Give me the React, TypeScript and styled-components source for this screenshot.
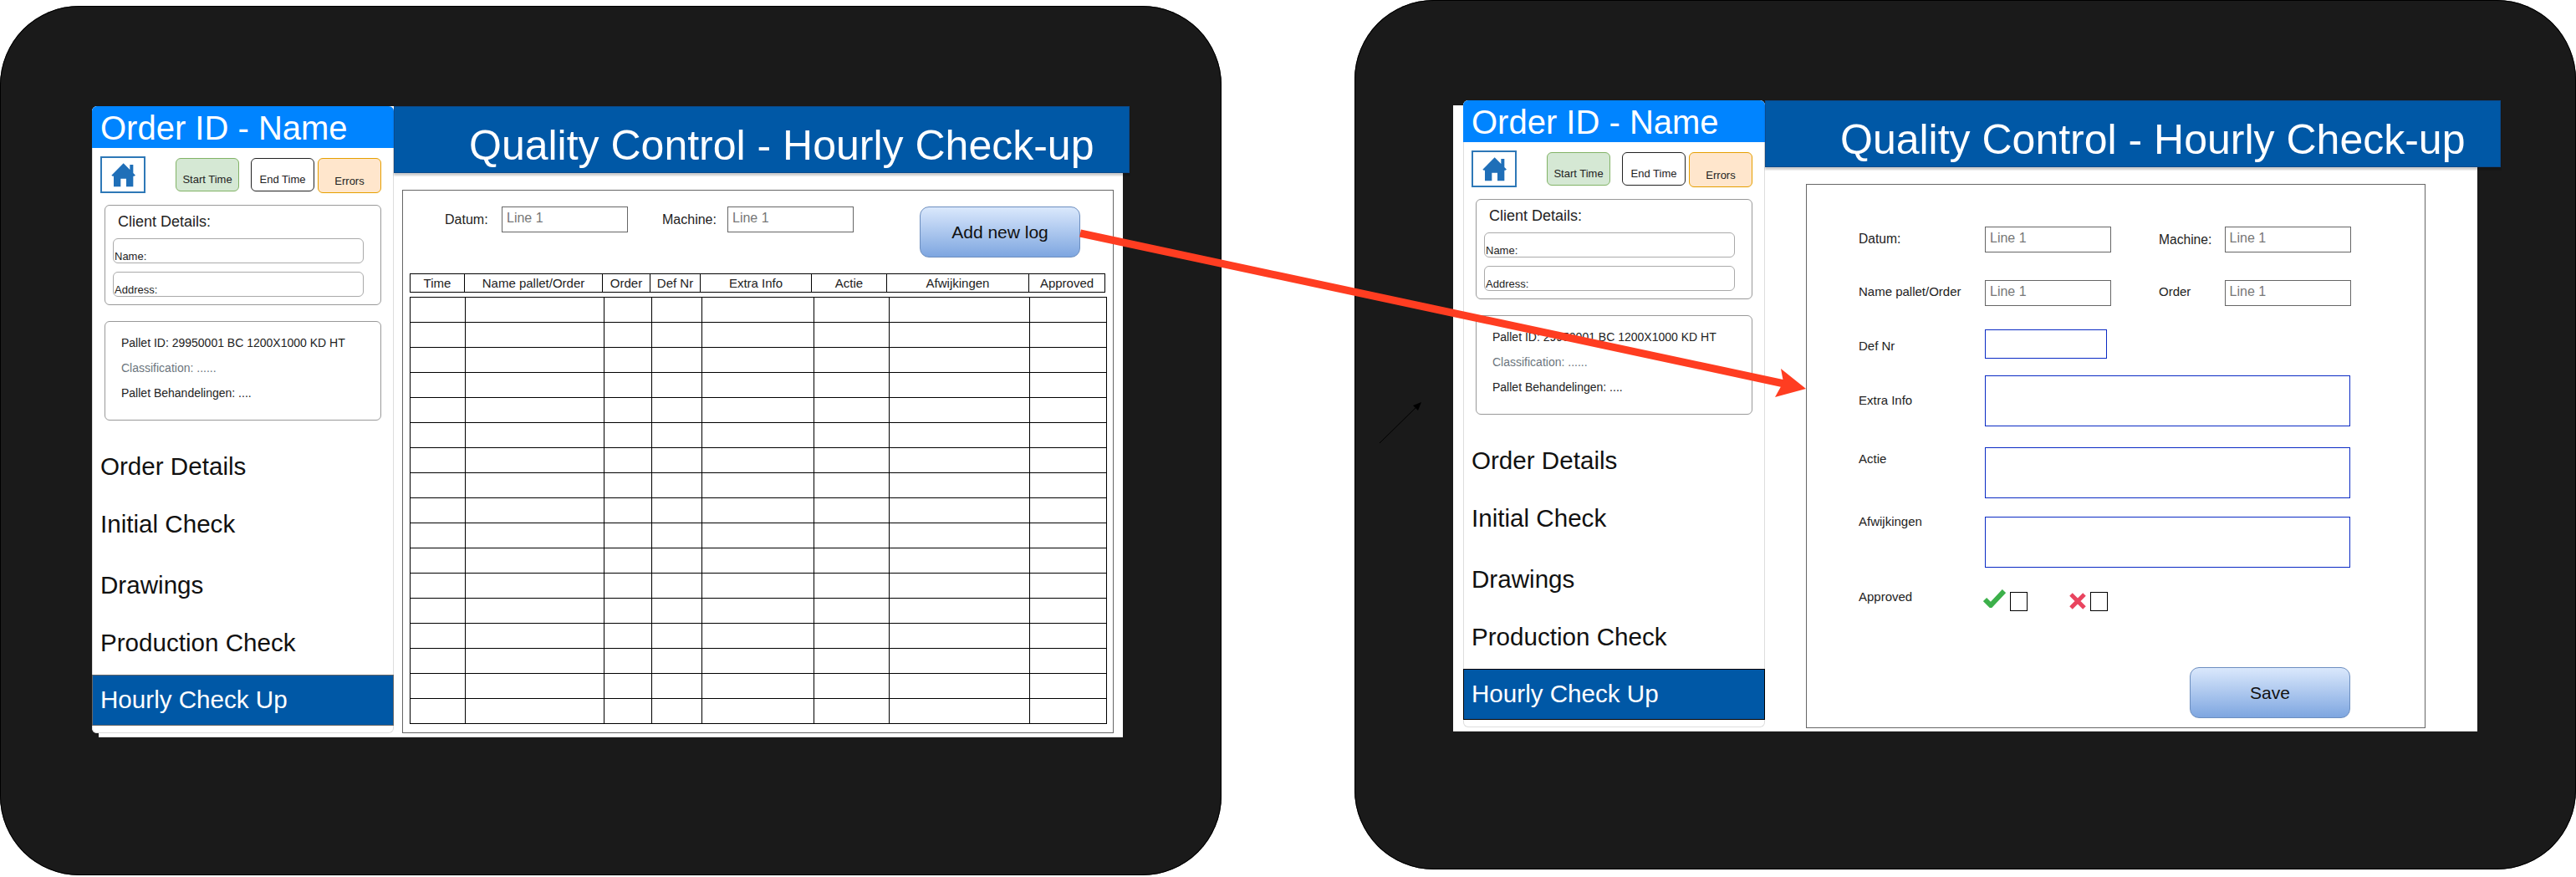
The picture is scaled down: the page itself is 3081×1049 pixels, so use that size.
import React from 'react';
import styled, { createGlobalStyle } from 'styled-components';

const GlobalStyle = createGlobalStyle`
  html, body {
    margin: 0;
    padding: 0;
    background: #fff;
    font-family: "Liberation Sans", Arial, sans-serif;
  }
  * {
    box-sizing: border-box;
  }
`;

const Page = styled.div`
  position: relative;
  display: flex;
  justify-content: space-between;
  align-items: flex-start;
  width: 3081px;
  height: 1049px;
  overflow: hidden;
`;

const Tablet = styled.div<{ $top: number; $paddingTop: number }>`
  width: 1461px;
  height: 1040px;
  margin-top: ${(p) => p.$top}px;
  padding-top: ${(p) => p.$paddingTop}px;
  background: #1a1a1a;
  border-radius: 95px;
  box-shadow: inset 0 0 0 1px #000;
`;

const Screen = styled.div<{ $left: number; $height: number }>`
  display: flex;
  align-items: flex-start;
  width: 1225px;
  height: ${(p) => p.$height}px;
  margin-left: ${(p) => p.$left}px;
  background: #fff;
  box-shadow: 0 1px 0 #ddd;
`;

const Sidebar = styled.div<{ $left: number; $top: number }>`
  flex: none;
  width: 361px;
  height: 750px;
  margin-left: ${(p) => p.$left}px;
  margin-top: ${(p) => p.$top}px;
  background: #fff;
  border-radius: 6px;
  box-shadow: inset 0 0 0 1px #ddd;
`;

const SidebarHeader = styled.div`
  height: 50px;
  padding: 3px 0 0 10px;
  background: #0084ff;
  border-radius: 6px 6px 0 0;
  color: #fff;
  font-size: 40px;
  line-height: 46px;
`;

const Toolbar = styled.div`
  display: flex;
  align-items: flex-start;
  height: 44px;
  margin: 10px 0 0 10px;
`;

const HomeButton = styled.div`
  display: flex;
  align-items: center;
  justify-content: center;
  width: 54px;
  height: 44px;
  margin-right: 36px;
  border: 2px solid #2e78b7;
`;

const StatusButton = styled.div<{ $bg: string; $line: string; $height: number; $gap: number }>`
  display: flex;
  align-items: flex-end;
  justify-content: center;
  width: 76px;
  height: ${(p) => p.$height}px;
  margin-top: 2px;
  margin-right: ${(p) => p.$gap}px;
  padding-bottom: 6px;
  background: ${(p) => p.$bg};
  border: 1px solid ${(p) => p.$line};
  border-radius: 6px;
  color: #222;
  font-size: 13px;
  line-height: 15px;
`;

const DetailsBox = styled.div<{ $top: number; $height: number }>`
  width: 331px;
  height: ${(p) => p.$height}px;
  margin: ${(p) => p.$top}px 0 0 15px;
  border: 1px solid #999;
  border-radius: 6px;
`;

const ClientBox = styled(DetailsBox)`
  padding: 9px 0 0 9px;
`;

const PalletBox = styled(DetailsBox)`
  padding: 10px 0 0 19px;
`;

const ClientTitle = styled.div`
  margin: 0 0 10px 6px;
  color: #222;
  font-size: 18px;
  line-height: 20px;
`;

const ClientField = styled.div`
  display: flex;
  align-items: flex-end;
  width: 300px;
  height: 30px;
  margin-bottom: 10px;
  padding-left: 1px;
  border: 1px solid #aaa;
  border-radius: 6px;
  color: #222;
  font-size: 13px;
  line-height: 15px;
`;

const PalletLine = styled.div<{ $muted?: boolean }>`
  color: ${(p) => (p.$muted ? '#6c757d' : '#222')};
  font-size: 14px;
  line-height: 30px;
`;

const NavList = styled.div`
  margin-top: 38px;
`;

const NavItem = styled.div<{ $height: number }>`
  height: ${(p) => p.$height}px;
  padding-left: 10px;
  color: #111;
  font-size: 29.6px;
  line-height: 34px;
`;

const ActiveNavItem = styled.div<{ $line: string }>`
  height: 61px;
  padding: 12px 0 0 9px;
  background: #0058a6;
  border: 1px solid ${(p) => p.$line};
  color: #fff;
  font-size: 29.6px;
  line-height: 34px;
`;

const Main = styled.div<{ $top: number }>`
  flex: 1;
  min-width: 0;
  margin-top: ${(p) => p.$top}px;
`;

const TitleBar = styled.div<{ $overhang: number }>`
  height: 80px;
  margin-right: -${(p) => p.$overhang}px;
  padding: 17px 0 0 89px;
  background: #0058a6;
  border: 1px solid #0a4a8c;
  box-shadow: 0 3px 2px rgba(0, 0, 0, 0.2);
  color: #fff;
  font-size: 50px;
  line-height: 58px;
  white-space: nowrap;
`;

const LogPanel = styled.div`
  width: 851px;
  height: 650px;
  margin: 20px 0 0 10px;
  padding: 19px 0 0 8px;
  border: 1px solid #666;
`;

const FilterRow = styled.div`
  display: flex;
  align-items: flex-start;
  padding-left: 42px;
`;

const FieldLabel = styled.div<{ $width: number; $top: number; $size?: number; $left?: number }>`
  flex: none;
  width: ${(p) => p.$width}px;
  margin-top: ${(p) => p.$top}px;
  margin-left: ${(p) => p.$left ?? 0}px;
  color: #222;
  font-size: ${(p) => p.$size ?? 15}px;
  line-height: 18px;
  white-space: nowrap;
`;

const LineInput = styled.div`
  flex: none;
  width: 151px;
  height: 31px;
  padding: 4px 0 0 5px;
  border: 1px solid #666;
  color: #777;
  font-size: 16px;
  line-height: 18px;
`;

const BlueBox = styled.div<{ $width: number; $height: number }>`
  flex: none;
  width: ${(p) => p.$width}px;
  height: ${(p) => p.$height}px;
  border: 1px solid #0a2ac4;
`;

const GradientButton = styled.div<{ $left: number }>`
  flex: none;
  display: flex;
  align-items: center;
  justify-content: center;
  width: 192px;
  height: 61px;
  margin-left: ${(p) => p.$left}px;
  background: linear-gradient(180deg, #dae8fc 0%, #7ea6e0 100%);
  border: 1px solid #6c8ebf;
  border-radius: 11px;
  color: #111;
  font-size: 21px;
`;

const LogTable = styled.table<{ $width: number; $top: number }>`
  width: ${(p) => p.$width}px;
  margin-top: ${(p) => p.$top}px;
  border-collapse: collapse;
  table-layout: fixed;

  td,
  th {
    padding: 0;
    border: 1px solid #000;
    color: #222;
    font-size: 15px;
    font-weight: 400;
    line-height: 18px;
    text-align: center;
    white-space: nowrap;
    overflow: hidden;
  }
`;

const HeadRow = styled.tr`
  height: 22px;
`;

const BodyRow = styled.tr`
  height: 30px;
`;

const FormPanel = styled.div`
  display: flex;
  flex-direction: column;
  width: 741px;
  height: 651px;
  margin: 20px 0 0 49px;
  padding: 50px 0 0 62px;
  border: 1px solid #666;
`;

const FormRow = styled.div<{ $top?: number }>`
  display: flex;
  align-items: flex-start;
  margin-top: ${(p) => p.$top ?? 0}px;
`;

const CheckBox = styled.div`
  flex: none;
  width: 21px;
  height: 23px;
  margin: 3px 0 0 5px;
  border: 1px solid #000;
`;

const MarkIcon = styled.svg<{ $left?: number; $top?: number }>`
  flex: none;
  display: block;
  margin-left: ${(p) => p.$left ?? 0}px;
  margin-top: ${(p) => p.$top ?? 0}px;
`;

const ArrowLayer = styled.svg`
  position: absolute;
  left: 0;
  top: 0;
  pointer-events: none;
`;

const headColumns = [65, 165, 57, 60, 133, 90, 170, 91];
const bodyColumns = [66, 166, 57, 60, 134, 90, 168, 92];
const headLabels = ['Time', 'Name pallet/Order', 'Order', 'Def Nr', 'Extra Info', 'Actie', 'Afwijkingen', 'Approved'];

function HomeIcon(): JSX.Element {
  return (
    <svg width="29" height="29" viewBox="0 0 87 87">
      <path
        d="M44 1L67 24V6H79V36L87 44L82 47H79V85H54V56H34V85H9V47H5L1 44Z"
        fill="#1f6fb8"
      />
    </svg>
  );
}

function SidebarContent(props: { barLine: string }): JSX.Element {
  return (
    <>
      <SidebarHeader>Order ID - Name</SidebarHeader>
      <Toolbar>
        <HomeButton>
          <HomeIcon />
        </HomeButton>
        <StatusButton $bg="#d5e8d4" $line="#82b366" $height={40} $gap={14}>
          Start Time
        </StatusButton>
        <StatusButton $bg="#fff" $line="#222" $height={40} $gap={4}>
          End Time
        </StatusButton>
        <StatusButton $bg="#ffe6cc" $line="#e69f00" $height={42} $gap={0}>
          Errors
        </StatusButton>
      </Toolbar>
      <ClientBox $top={14} $height={120}>
        <ClientTitle>Client Details:</ClientTitle>
        <ClientField>Name:</ClientField>
        <ClientField>Address:</ClientField>
      </ClientBox>
      <PalletBox $top={19} $height={119}>
        <PalletLine>Pallet ID: 29950001 BC 1200X1000 KD HT</PalletLine>
        <PalletLine $muted>Classification: ......</PalletLine>
        <PalletLine>Pallet Behandelingen: ....</PalletLine>
      </PalletBox>
      <NavList>
        <NavItem $height={69}>Order Details</NavItem>
        <NavItem $height={73}>Initial Check</NavItem>
        <NavItem $height={69}>Drawings</NavItem>
        <NavItem $height={55}>Production Check</NavItem>
        <ActiveNavItem $line={props.barLine}>Hourly Check Up</ActiveNavItem>
      </NavList>
    </>
  );
}

function LogOverview(): JSX.Element {
  return (
    <LogPanel>
      <FilterRow>
        <FieldLabel $width={68} $top={7} $size={16}>
          Datum:
        </FieldLabel>
        <LineInput>Line 1</LineInput>
        <FieldLabel $width={78} $left={41} $top={7} $size={16}>
          Machine:
        </FieldLabel>
        <LineInput>Line 1</LineInput>
        <GradientButton $left={79}>Add new log</GradientButton>
      </FilterRow>
      <LogTable $width={831} $top={19}>
        <colgroup>
          {headColumns.map((w, i) => (
            <col key={i} width={w} />
          ))}
        </colgroup>
        <thead>
          <HeadRow>
            {headLabels.map((label) => (
              <th key={label}>{label}</th>
            ))}
          </HeadRow>
        </thead>
      </LogTable>
      <LogTable $width={833} $top={5}>
        <colgroup>
          {bodyColumns.map((w, i) => (
            <col key={i} width={w} />
          ))}
        </colgroup>
        <tbody>
          {Array.from({ length: 17 }).map((_, row) => (
            <BodyRow key={row}>
              {bodyColumns.map((_w, cell) => (
                <td key={cell} />
              ))}
            </BodyRow>
          ))}
        </tbody>
      </LogTable>
    </LogPanel>
  );
}

function LogForm(): JSX.Element {
  return (
    <FormPanel>
      <FormRow>
        <FieldLabel $width={151} $top={6} $size={15.6}>
          Datum:
        </FieldLabel>
        <LineInput>Line 1</LineInput>
        <FieldLabel $width={78.6} $left={57} $top={7} $size={15.6}>
          Machine:
        </FieldLabel>
        <LineInput>Line 1</LineInput>
      </FormRow>
      <FormRow $top={33}>
        <FieldLabel $width={151} $top={5}>
          Name pallet/Order
        </FieldLabel>
        <LineInput>Line 1</LineInput>
        <FieldLabel $width={78.6} $left={57} $top={5}>
          Order
        </FieldLabel>
        <LineInput>Line 1</LineInput>
      </FormRow>
      <FormRow $top={28}>
        <FieldLabel $width={151} $top={11}>
          Def Nr
        </FieldLabel>
        <BlueBox $width={146} $height={35} />
      </FormRow>
      <FormRow $top={20}>
        <FieldLabel $width={151} $top={21}>
          Extra Info
        </FieldLabel>
        <BlueBox $width={437} $height={61} />
      </FormRow>
      <FormRow $top={25}>
        <FieldLabel $width={151} $top={5}>
          Actie
        </FieldLabel>
        <BlueBox $width={437} $height={61} />
      </FormRow>
      <FormRow $top={22}>
        <FieldLabel $width={151} $top={-3}>
          Afwijkingen
        </FieldLabel>
        <BlueBox $width={437} $height={61} />
      </FormRow>
      <FormRow $top={26}>
        <FieldLabel $width={149} $top={0}>
          Approved
        </FieldLabel>
        <MarkIcon width="27" height="22" viewBox="0 0 27 22">
          <path d="M2 12L9 19L25 2" fill="none" stroke="#3cb04a" strokeWidth="6" />
        </MarkIcon>
        <CheckBox />
        <MarkIcon width="20" height="20" viewBox="0 0 20 20" $left={50} $top={4}>
          <path d="M2 2L18 18M18 2L2 18" fill="none" stroke="#e9445f" strokeWidth="5" />
        </MarkIcon>
        <CheckBox />
      </FormRow>
      <FormRow $top={67}>
        <GradientButton $left={396}>Save</GradientButton>
      </FormRow>
    </FormPanel>
  );
}

export default function App(): JSX.Element {
  return (
    <Page>
      <GlobalStyle />
      <Tablet $top={7} $paddingTop={120}>
        <Screen $left={118} $height={754}>
          <Sidebar $left={-8} $top={0}>
            <SidebarContent barLine="#666" />
          </Sidebar>
          <Main $top={0}>
            <TitleBar $overhang={8}>Quality Control - Hourly Check-up</TitleBar>
            <LogOverview />
          </Main>
        </Screen>
      </Tablet>
      <Tablet $top={0} $paddingTop={126}>
        <Screen $left={118} $height={748}>
          <Sidebar $left={12} $top={-6}>
            <SidebarContent barLine="#000" />
          </Sidebar>
          <Main $top={-6}>
            <TitleBar $overhang={28}>Quality Control - Hourly Check-up</TitleBar>
            <LogForm />
          </Main>
        </Screen>
      </Tablet>
      <ArrowLayer width="3081" height="1049" viewBox="0 0 3081 1049">
        <line x1="1292" y1="279" x2="2134" y2="459" stroke="#ff3d21" strokeWidth="9" />
        <polygon points="2160,465 2130,441 2133,457 2123,475" fill="#ff3d21" />
        <line x1="1650" y1="530" x2="1697" y2="484" stroke="#000" strokeWidth="1" />
        <polygon points="1700,481 1690,485 1696,491" fill="#000" />
      </ArrowLayer>
    </Page>
  );
}
